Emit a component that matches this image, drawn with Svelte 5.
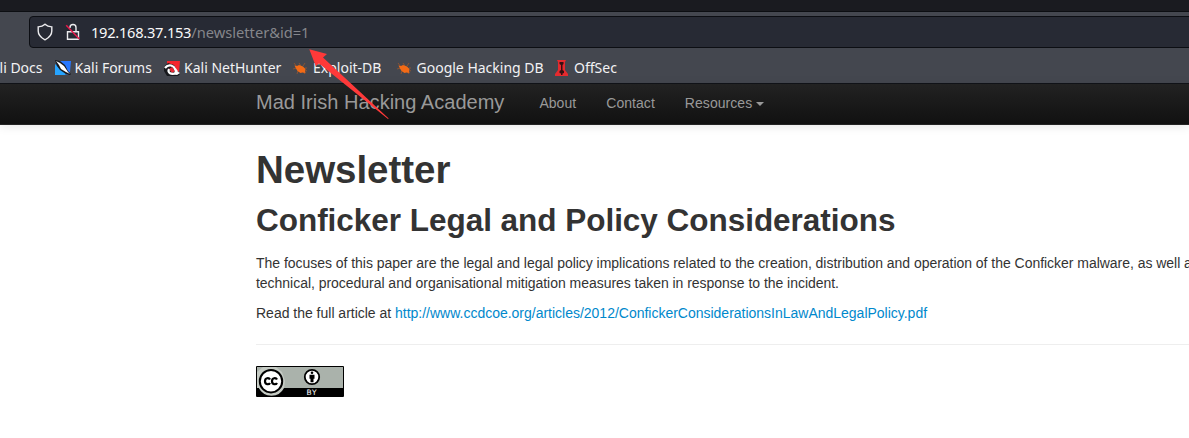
<script>
  const bookmarks = [
    { label: 'Kali Docs', icon: '' },
    { label: 'Kali Forums', icon: 'forums', width: 109.5 },
    { label: 'Kali NetHunter', icon: 'nethunter', width: 129 },
    { label: 'Exploit-DB', icon: 'bug', width: 103.5 },
    { label: 'Google Hacking DB', icon: 'bug', width: 157.5 },
    { label: 'OffSec', icon: 'offsec', width: 90 }
  ];
</script>

<div class="screen">
  <div class="tabs"></div>
  <div class="toolbar">
    <div class="urlbar">
      <svg class="shield" width="16" height="18" viewBox="0 0 16 18"><path d="M8 1.200C6.300 2.800 3.800 3.700 1.200 3.900V8c0 4 2.700 6.700 6.800 8.800 4.100-2.100 6.800-4.800 6.800-8.800V3.900C12.200 3.700 9.700 2.800 8 1.200Z" /></svg>
      <svg class="lock" width="16" height="18" viewBox="0 0 16 18"><path d="M5 5V4.500a3 3 0 0 1 6 0V8M2.500 8.700h11v7.500h-11Z" /><path class="slash" d="M1.200 2.200L14.300 16" /></svg>
      <span class="address"><b>192.168.37.153</b>/newsletter&amp;id=1</span>
    </div>
  </div>
  <div class="bookmarks">
    {#each bookmarks as mark}
      <div class="bookmark" class:clipped={!mark.icon} style:width={mark.width ? `${mark.width}px` : null}>
        {#if mark.icon}
          <svg width="16" height="16" viewBox="0 0 16 16">
            {#if mark.icon === 'forums'}
              <path fill="#2878ff" d="M4 1h12l-1 11-3 3L1 4Z" />
              <path fill="#26a4ff" d="M0 4l11 10-1 1H0Z" />
              <path fill="#17191d" d="M0 0l5 1 5 4 3 6 3 3-1 1-4-1-6-4-3-4Z" />
              <path fill="#fff" d="M1 1l4 2 4 3 2 3 2 3 2 2-4-2-5-3-2-4Z" />
            {:else if mark.icon === 'nethunter'}
              <path fill="#f5262d" d="M3 1h13l-1 11-3-2-3-4-6 1Z" />
              <path fill="#17191d" d="M0 7l4-4 6 2 3 6 3 3-2 2H3L0 11Z" />
              <path fill="#e62a35" d="M5 9l3-2 3 4-3 2Z" />
              <path fill="none" stroke="#fff" stroke-width="2.300" d="M1 8c4-5 9-2 10 1l2 3" />
              <path fill="none" stroke="#fff" stroke-width="2.200" d="M5 9c-2 4 2 6 8 4" />
              <path fill="#fff" d="M11 10l5 3-3 2-3-1Z" />
            {:else if mark.icon === 'bug'}
              <path stroke="#a65928" stroke-width=".7" d="M1 3l3 4M6 3l2 3M0 9l4-1M10 11l2 3M5 11l-1 3M10 6l2-3M12 8h2M12 10l2 1" />
              <path fill="#f26a16" d="M1.500 5.500L4 6l2-1 4 1.500 2.500 2.500-.5 1.500.5 2.500-3-.5-2 .5-3-2-1.500-2.500Z" />
            {:else}
              <path fill="#e52a2e" d="M3 0h9l-1 2v8l3 4v2H1v-2l3-4V2Z" />
              <path fill="#351012" d="M5.500 2h4v2L8.500 5v5l1.500 1v2l-1.500.5V15H7v-1.500L5.500 13v-2L7 10V5L5.500 4Z" />
            {/if}
          </svg>
        {/if}
        <span>{mark.label}</span>
      </div>
    {/each}
  </div>
  <nav>
    <a class="brand" href="#home">Mad Irish Hacking Academy</a>
    <a href="#about">About</a>
    <a href="#contact">Contact</a>
    <a href="#resources">Resources <i></i></a>
  </nav>
  <main>
    <h1>Newsletter</h1>
    <h2>Conficker Legal and Policy Considerations</h2>
    <p class="summary">The focuses of this paper are the legal and legal policy implications related to the creation, distribution and operation of the Conficker malware, as well as the<br />technical, procedural and organisational mitigation measures taken in response to the incident.</p>
    <p>Read the full article at <a href="#article">http://www.ccdcoe.org/articles/2012/ConfickerConsiderationsInLawAndLegalPolicy.pdf</a></p>
    <hr />
    <svg class="license" width="88" height="31" viewBox="0 0 88 31">
      <rect width="88" height="31" rx="1" />
      <path fill="#aab2ab" d="M1 1h86v21H26c-2 4-6 7-11 7-6 0-10-3-12-7H1Z" />
      <path fill="#c5cbc4" d="M3 22a14 14 0 0 0 25 0l1-7-3-9-6-5H7L1 6v16Z" />
      <circle cx="15" cy="15.200" r="11.200" fill="#fff" stroke="#000" stroke-width="2" />
      <path d="M14 13.500c-1-2-5-2-5 1.700s4 3.700 5 1.700M21 13.500c-1-2-5-2-5 1.700s4 3.700 5 1.700" fill="none" stroke="#000" stroke-width="2.200" />
      <circle cx="56" cy="11" r="7.200" fill="#fff" stroke="#000" stroke-width="1.800" />
      <circle cx="56" cy="6.800" r="1.300" /><path d="M53.500 8.700h5v4h-1v3.500h-3v-3.500h-1Z" />
      <text x="50.500" y="29">BY</text>
    </svg>
  </main>
  <svg class="arrow" width="80" height="70" viewBox="0 0 80 70"><path d="M.3.300L18 5l-4 3.500L79.700 69.500 79 70 10 14.500 6.700 17Z" /></svg>
</div>

<style>
  :global(body) { overflow: hidden; background: #fff; }
  .screen { position: relative; width: 1189px; height: 438px; overflow: hidden; background: #fff; color: #333; font-family: "Liberation Sans", sans-serif; font-size: 14px; line-height: 20px; }
  .tabs { height: 12px; box-sizing: border-box; background: #1a1b20; border-bottom: 1px solid #0c0e12; }
  .toolbar { height: 36px; padding: 4px 0 0 29px; box-sizing: border-box; background: #44474f; font-family: "Noto Sans", sans-serif; }
  .urlbar { display: flex; align-items: center; width: 1170px; height: 32px; padding-left: 7px; box-sizing: border-box; background: #272a34; border: 1px solid #0c0e13; border-radius: 4px; }
  .shield, .lock { fill: none; stroke: #ececee; stroke-width: 1.400; }
  .lock { margin-left: 12px; }
  .lock .slash { stroke: #e6194b; stroke-width: 1.500; }
  .address { margin-left: 10px; color: #85868b; font-size: 14.670px; white-space: pre; }
  .address b { color: #f9f9fa; font-weight: 400; letter-spacing: -.270px; }
  .bookmarks { display: flex; align-items: center; height: 36px; box-sizing: border-box; background: #44474f; border-bottom: 1px solid #111318; color: #f2f2f4; font-family: "Noto Sans", sans-serif; font-size: 14px; }
  .bookmark { display: flex; flex: none; align-items: center; gap: 4px; padding-top: 5px; white-space: nowrap; }
  .clipped { width: 54.500px; }
  .clipped span { margin-left: -17px; }
  nav { display: flex; align-items: center; gap: 30px; height: 41px; padding: 0 0 2px 256px; box-sizing: border-box; background: linear-gradient(#222, #111); border-bottom: 1px solid #252525; box-shadow: 0 1px 10px rgba(0, 0, 0, .1); }
  nav a { color: #999; text-decoration: none; letter-spacing: .050px; }
  nav .brand { margin: -2px 5px 0 0; font-size: 20px; letter-spacing: .020px; }
  nav i { display: inline-block; margin-left: 0; border: 4px solid transparent; border-top-color: #999; border-bottom: 0; vertical-align: 2px; }
  main { padding: 25px 0 0 256px; width: 1300px; }
  h1, h2 { margin: 0; line-height: 40px; font-weight: 700; }
  h1 { font-size: 38.500px; letter-spacing: -.040px; }
  h2 { margin: 10px 0 13px; font-size: 31.500px; letter-spacing: -.030px; }
  p { margin: 0 0 10px; white-space: nowrap; letter-spacing: -.010px; }
  .summary { letter-spacing: -.032px; }
  p a { color: #08c; text-decoration: none; }
  hr { margin: 21px 0 21px; border: 0; border-top: 1px solid #eee; }
  .license { display: block; }
  .license text { fill: #fff; font: 7.5px "DejaVu Sans", sans-serif; letter-spacing: .7px; }
  .arrow { position: absolute; top: 49px; left: 309px; fill: #ff3939; }
</style>
